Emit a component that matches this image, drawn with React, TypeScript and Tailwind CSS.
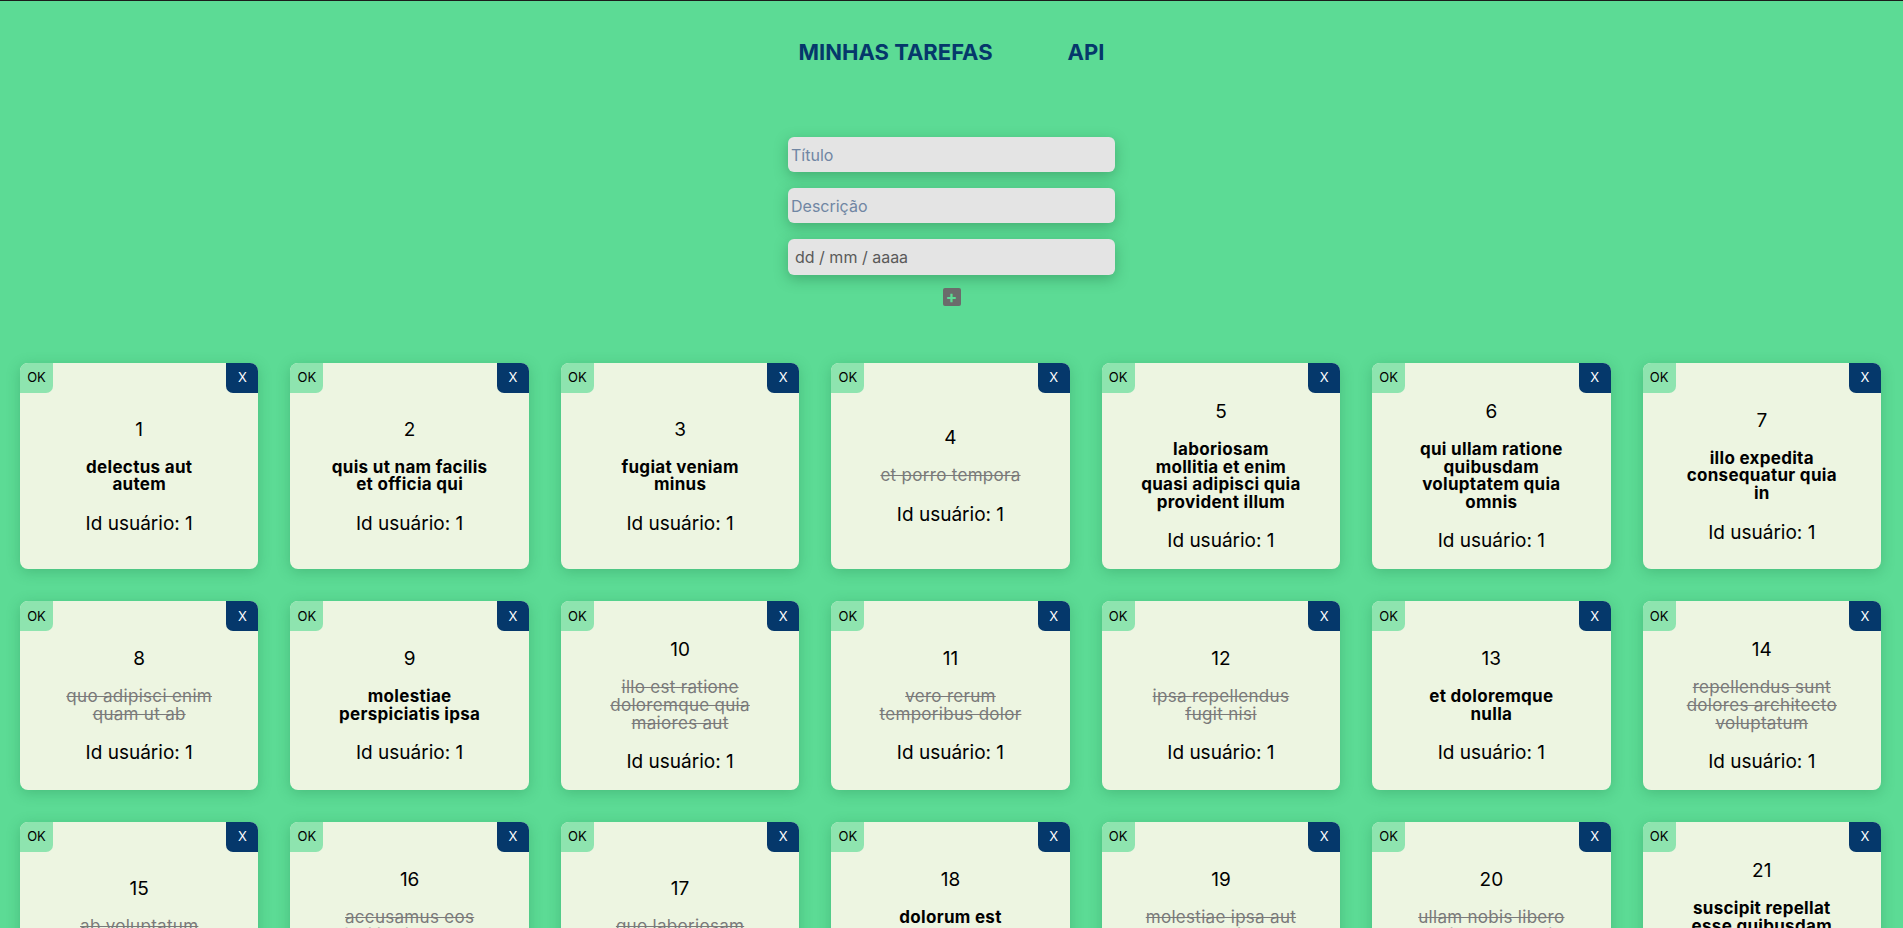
import React from "react";

type Todo = { id: number; lines: string[]; done: boolean };

const todos: Todo[] = [
  { id: 1, lines: ["delectus aut", "autem"], done: false },
  { id: 2, lines: ["quis ut nam facilis", "et officia qui"], done: false },
  { id: 3, lines: ["fugiat veniam", "minus"], done: false },
  { id: 4, lines: ["et porro tempora"], done: true },
  { id: 5, lines: ["laboriosam", "mollitia et enim", "quasi adipisci quia", "provident illum"], done: false },
  { id: 6, lines: ["qui ullam ratione", "quibusdam", "voluptatem quia", "omnis"], done: false },
  { id: 7, lines: ["illo expedita", "consequatur quia", "in"], done: false },
  { id: 8, lines: ["quo adipisci enim", "quam ut ab"], done: true },
  { id: 9, lines: ["molestiae", "perspiciatis ipsa"], done: false },
  { id: 10, lines: ["illo est ratione", "doloremque quia", "maiores aut"], done: true },
  { id: 11, lines: ["vero rerum", "temporibus dolor"], done: true },
  { id: 12, lines: ["ipsa repellendus", "fugit nisi"], done: true },
  { id: 13, lines: ["et doloremque", "nulla"], done: false },
  { id: 14, lines: ["repellendus sunt", "dolores architecto", "voluptatum"], done: true },
  { id: 15, lines: ["ab voluptatum", "amet voluptas"], done: true },
  { id: 16, lines: ["accusamus eos", "facilis sint et aut", "voluptatem"], done: true },
  { id: 17, lines: ["quo laboriosam", "deleniti aut qui"], done: true },
  { id: 18, lines: ["dolorum est", "consequatur ea", "mollitia in culpa"], done: false },
  { id: 19, lines: ["molestiae ipsa aut", "voluptatibus", "pariatur dolor nihil"], done: true },
  { id: 20, lines: ["ullam nobis libero", "sapiente ad optio", "sint"], done: true },
  { id: 21, lines: ["suscipit repellat", "esse quibusdam", "voluptatem", "incidunt"], done: false },
];

function Card({ t }: { t: Todo }) {
  return (
    <div className="relative flex flex-col items-center justify-center rounded-[8px] bg-[#EDF5E1] pt-[37px] pb-[17px] text-center shadow-[0_3px_14px_rgba(20,110,60,0.28)]">
      <button className="absolute left-0 top-0 flex h-[30px] w-[33px] items-center justify-center rounded-tl-[8px] rounded-br-[7px] bg-[#8EE4AF] text-[13px] text-black">
        OK
      </button>
      <button className="absolute right-0 top-0 flex h-[30px] w-[32px] items-center justify-center rounded-tr-[8px] rounded-bl-[7px] bg-[#05386B] text-[13px] text-white">
        X
      </button>
      <div className="text-[19px] leading-[23px] text-black">{t.id}</div>
      <div
        className={
          t.done
            ? "mt-[18px] text-[17px] leading-[17.6px] tracking-[0.3px] font-normal text-[#7a7a7a] line-through"
            : "mt-[18px] text-[17px] leading-[17.6px] tracking-[0.3px] font-bold text-black"
        }
      >
        {t.lines.map((l, i) => (
          <div key={i} className="whitespace-nowrap">
            {l}
          </div>
        ))}
      </div>
      <div className="mt-[18px] text-[19px] leading-[23px] text-black">Id usuário: 1</div>
    </div>
  );
}

export default function App() {
  return (
    <div className="min-h-screen border-t border-[#1b1b1b] bg-[#5cdb95] font-[Inter,sans-serif]">
      <nav className="flex justify-center gap-[75px] pt-[37px]">
        <a className="text-[22px] font-bold leading-[28px] text-[#05386B]">MINHAS TAREFAS</a>
        <a className="text-[22px] font-bold leading-[28px] text-[#05386B]">API</a>
      </nav>

      <form className="mt-[71px] flex flex-col items-center gap-[16px]">
        <input
          placeholder="Título"
          className="h-[35px] w-[327px] rounded-[6px] bg-[#e4e4e4] px-[3px] text-[16px] text-[#333] shadow-[0_4px_14px_rgba(20,90,50,0.35)] outline-none placeholder:text-[#7086a3]"
        />
        <input
          placeholder="Descrição"
          className="h-[35px] w-[327px] rounded-[6px] bg-[#e4e4e4] px-[3px] text-[16px] text-[#333] shadow-[0_4px_14px_rgba(20,90,50,0.35)] outline-none placeholder:text-[#7086a3]"
        />
        <input
          placeholder="dd / mm / aaaa"
          className="h-[36px] w-[327px] rounded-[6px] bg-[#e4e4e4] px-[7px] text-[16px] text-[#555] shadow-[0_4px_14px_rgba(20,90,50,0.35)] outline-none placeholder:text-[#5a5a5a]"
        />
        <button
          type="button"
          className="-mt-[3px] flex h-[18px] w-[18px] items-center justify-center rounded-[2px] bg-[#6b6b6b] text-[17px] font-bold leading-none text-[#5cdb95]"
        >
          +
        </button>
      </form>

      <div className="mt-[57px] grid grid-cols-7 gap-x-[32px] gap-y-[32px] pl-[20px] pr-[22px] pb-[40px]">
        {todos.map((t) => (
          <Card key={t.id} t={t} />
        ))}
      </div>
    </div>
  );
}
